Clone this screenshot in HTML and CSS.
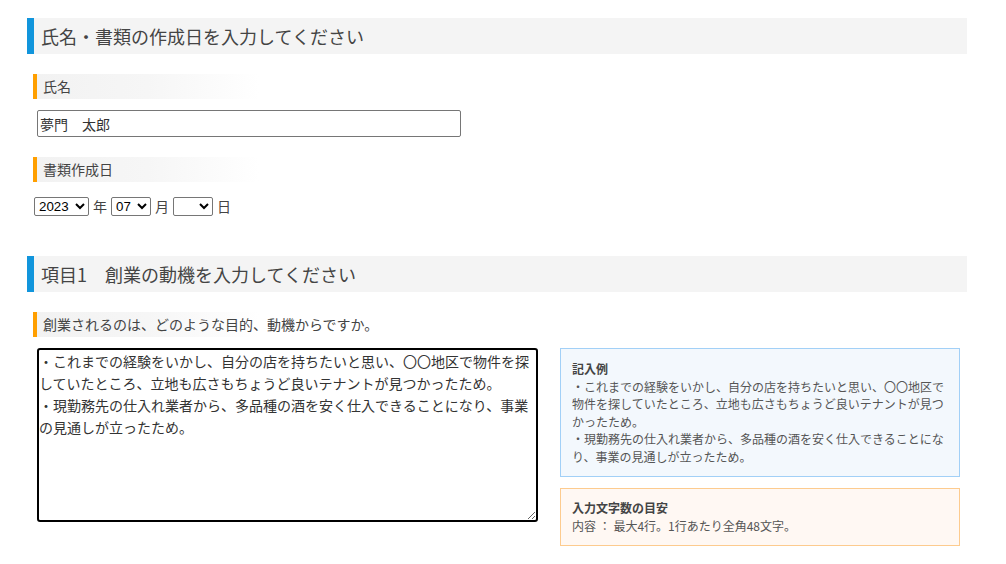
FILE: index.html
```html
<!DOCTYPE html>
<html lang="ja">
<head>
<meta charset="utf-8">
<title>創業計画</title>
<link rel="stylesheet" href="styles.css">
</head>
<body>
<div class="page">
  <h2 class="sec-title">氏名・書類の作成日を入力してください</h2>

  <div class="field">
    <div class="label">氏名</div>
    <input class="text-input" type="text" value="夢門　太郎">
  </div>

  <div class="field">
    <div class="label">書類作成日</div>
    <div class="date-row">
      <select class="sel sel-year"><option>2023</option></select>
      <span class="unit">年</span>
      <select class="sel sel-month"><option>07</option></select>
      <span class="unit">月</span>
      <select class="sel sel-day"><option></option></select>
      <span class="unit">日</span>
    </div>
  </div>

  <h2 class="sec-title sec-title-2">項目1　創業の動機を入力してください</h2>

  <div class="field">
    <div class="label">創業されるのは、どのような目的、動機からですか。</div>
    <div class="answer-row">
      <textarea class="answer">・これまでの経験をいかし、自分の店を持ちたいと思い、〇〇地区で物件を探していたところ、立地も広さもちょうど良いテナントが見つかったため。
・現勤務先の仕入れ業者から、多品種の酒を安く仕入できることになり、事業の見通しが立ったため。</textarea>
      <div class="aside">
        <div class="note note-example">
          <div class="note-title">記入例</div>
          <div>・これまでの経験をいかし、自分の店を持ちたいと思い、〇〇地区で物件を探していたところ、立地も広さもちょうど良いテナントが見つかったため。</div>
          <div>・現勤務先の仕入れ業者から、多品種の酒を安く仕入できることになり、事業の見通しが立ったため。</div>
        </div>
        <div class="note note-limit">
          <div class="note-title">入力文字数の目安</div>
          <div>内容 ： 最大4行。1行あたり全角48文字。</div>
        </div>
      </div>
    </div>
  </div>
</div>
</body>
</html>
```

FILE: styles.css
```css
html, body {
  margin: 0;
  padding: 0;
  background: #fff;
}

body {
  font-family: "Noto Sans CJK JP", "Noto Sans", sans-serif;
  color: #444;
}

.page {
  width: 940px;
  padding: 18px 0 0 27px;
}

.sec-title {
  margin: 0;
  height: 36px;
  box-sizing: border-box;
  background: #f4f4f4;
  border-left: 7px solid #1195dc;
  padding-left: 7px;
  font-size: 18px;
  font-weight: normal;
  line-height: 36px;
  color: #444;
}

.sec-title-2 {
  margin-top: 40px;
}

.field {
  margin-top: 20px;
}

.label {
  margin-left: 6px;
  width: 226px;
  height: 25px;
  box-sizing: border-box;
  border-left: 4px solid #ff9f00;
  padding-left: 6px;
  background: linear-gradient(to right, #f2f2f2 0%, #f6f6f6 50%, #ffffff 100%);
  font-size: 14px;
  line-height: 25px;
  color: #444;
  white-space: nowrap;
}

.text-input {
  display: block;
  margin: 11px 0 0 10px;
  width: 424px;
  height: 27px;
  box-sizing: border-box;
  border: 1px solid #767676;
  border-radius: 2px;
  padding: 0 2px;
  font-family: "Noto Sans CJK JP", sans-serif;
  font-size: 14px;
  color: #333;
}

.date-row {
  margin: 14px 0 0 7px;
  display: flex;
  align-items: center;
  height: 20px;
}

.sel {
  height: 19px;
  box-sizing: border-box;
  font-family: "Liberation Sans", Arial, sans-serif;
  font-size: 13.333px;
  color: #000;
  border: 1px solid #767676;
  border-radius: 2px;
  background: #fff;
  padding: 0;
}

.sel-year { width: 55px; }
.sel-month { width: 40px; }
.sel-day { width: 40px; }

.unit {
  margin: 0 4px 0 4px;
  font-size: 14px;
  line-height: 20px;
  color: #444;
}

.answer-row {
  margin: 11px 0 0 10px;
  display: flex;
  align-items: flex-start;
  gap: 22px;
}

.answer {
  width: 501px;
  height: 174px;
  box-sizing: border-box;
  border: 2px solid #000;
  border-radius: 3px;
  outline: none;
  padding: 0;
  margin: 0;
  font-family: "Noto Sans CJK JP", sans-serif;
  font-size: 14px;
  line-height: 22px;
  color: #333;
  resize: both;
}

.aside {
  display: flex;
  flex-direction: column;
  gap: 11px;
  width: 400px;
}

.note {
  box-sizing: border-box;
  border: 1px solid;
  font-size: 12px;
  line-height: 17.5px;
  color: #555;
  padding: 11px 11px;
}

.note-example {
  height: 129px;
  background: #f3f8fd;
  border-color: #a2d0f7;
}

.note-limit {
  height: 58px;
  padding-top: 10px;
  background: #fff8f3;
  border-color: #fdcb8e;
}

.note-title {
  font-weight: bold;
  color: #444;
}
```
